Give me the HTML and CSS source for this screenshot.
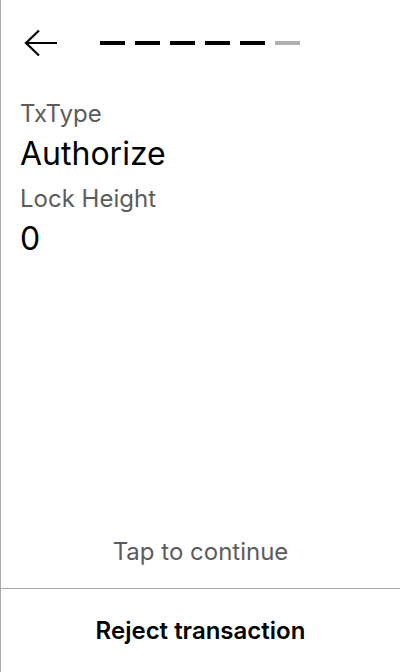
FILE: index.html
```html
<!DOCTYPE html>
<html>
<head>
<meta charset="utf-8">
<link rel="stylesheet" href="styles.css">
</head>
<body>
<div class="screen">
  <header class="header">
    <button class="back" aria-label="Back">
      <svg width="34" height="28" viewBox="0 0 34 28">
        <path d="M33 14 H2 M15 1.5 L2 14 L15 26.5" fill="none" stroke="#000" stroke-width="2.2"/>
      </svg>
    </button>
    <div class="steps">
      <span class="step done"></span>
      <span class="step done"></span>
      <span class="step done"></span>
      <span class="step done"></span>
      <span class="step done"></span>
      <span class="step"></span>
    </div>
  </header>
  <main class="content">
    <div class="label">TxType</div>
    <div class="value">Authorize</div>
    <div class="label">Lock Height</div>
    <div class="value">0</div>
  </main>
  <div class="tap">Tap to continue</div>
  <footer class="footer">Reject transaction</footer>
</div>
</body>
</html>
```
FILE: styles.css
```css
html, body {
  margin: 0;
  padding: 0;
  background: #fff;
}
body {
  font-family: Inter, "Noto Sans", sans-serif;
  color: #000;
}
.screen {
  width: 399px;
  height: 672px;
  border-left: 1px solid #aaa;
  display: flex;
  flex-direction: column;
}
.header {
  height: 86px;
  display: flex;
  align-items: center;
  padding-left: 23px;
}
.back {
  border: 0;
  background: none;
  padding: 0;
  width: 34px;
  height: 28px;
  display: flex;
}
.steps {
  display: flex;
  gap: 10px;
  margin-left: 42px;
}
.step {
  width: 25px;
  height: 4px;
  background: #b0b0b0;
}
.step.done {
  background: #000;
}
.content {
  flex: 1;
  padding: 13px 19px 0;
}
.label {
  font-size: 24px;
  line-height: 29px;
  color: #5c5c5c;
}
.value {
  font-size: 32px;
  line-height: 39px;
  margin-top: 6px;
  margin-bottom: 11px;
}
.tap {
  text-align: center;
  font-size: 24px;
  line-height: 29px;
  color: #5c5c5c;
  padding-bottom: 22px;
}
.footer {
  height: 84px;
  box-sizing: border-box;
  border-top: 1px solid #aaa;
  padding-top: 27px;
  text-align: center;
  font-size: 24px;
  line-height: 29px;
  font-weight: 600;
}
```
